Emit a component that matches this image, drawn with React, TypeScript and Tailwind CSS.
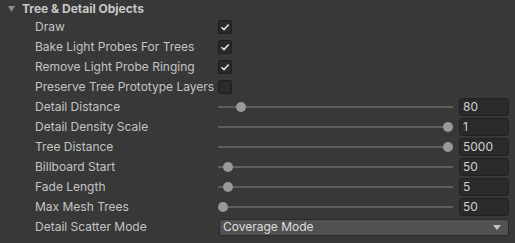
import * as React from 'react';

type Row =
  | { label: string; kind: 'check'; checked: boolean }
  | { label: string; kind: 'slider'; pos: number; value: string }
  | { label: string; kind: 'select'; value: string };

const rows: Row[] = [
  { label: 'Draw', kind: 'check', checked: true },
  { label: 'Bake Light Probes For Trees', kind: 'check', checked: true },
  { label: 'Remove Light Probe Ringing', kind: 'check', checked: true },
  { label: 'Preserve Tree Prototype Layers', kind: 'check', checked: false },
  { label: 'Detail Distance', kind: 'slider', pos: 0.08, value: '80' },
  { label: 'Detail Density Scale', kind: 'slider', pos: 1, value: '1' },
  { label: 'Tree Distance', kind: 'slider', pos: 1, value: '5000' },
  { label: 'Billboard Start', kind: 'slider', pos: 0.022, value: '50' },
  { label: 'Fade Length', kind: 'slider', pos: 0.022, value: '5' },
  { label: 'Max Mesh Trees', kind: 'slider', pos: 0, value: '50' },
  { label: 'Detail Scatter Mode', kind: 'select', value: 'Coverage Mode' },
];

function Check({ checked }: { checked: boolean }) {
  return (
    <div className="w-[14px] h-[14px] rounded-[2px] bg-[#2a2a2a] border border-[#1e1e1e] flex items-center justify-center">
      {checked && (
        <svg width="10" height="10" viewBox="0 0 10 10">
          <path d="M1.5 5.2 L4 7.6 L8.6 2.4" fill="none" stroke="#e6e6e6" strokeWidth="1.5" />
        </svg>
      )}
    </div>
  );
}

function Slider({ pos, value }: { pos: number; value: string }) {
  return (
    <div className="flex items-center flex-1 h-full">
      <div className="relative w-[235px] h-full flex items-center">
        <div className="w-full h-[2px] bg-[#5e5e5e]" />
        <div
          className="absolute w-[10px] h-[10px] rounded-full bg-[#999999]"
          style={{ left: 5 + pos * 225 - 5 }}
        />
      </div>
      <div className="ml-[6px] w-[50px] h-[18px] rounded-[3px] bg-[#2a2a2a] border border-[#212121] flex items-center pl-[3px] text-[#d2d2d2]">
        {value}
      </div>
    </div>
  );
}

function Select({ value }: { value: string }) {
  return (
    <div className="ml-[1px] w-[290px] h-[17px] rounded-[3px] bg-[#515151] border border-[#2a2a2a] flex items-center justify-between pl-[3px] pr-[7px] text-[#dedede]">
      <span>{value}</span>
      <svg width="8" height="5" viewBox="0 0 8 5">
        <path d="M0 0 H8 L4 5 Z" fill="#c4c4c4" />
      </svg>
    </div>
  );
}

export default function App() {
  return (
    <div
      className="w-[515px] h-[243px] bg-[#383838] text-[12px] text-[#c4c4c4] overflow-hidden"
      style={{ fontFamily: 'Inter, "Noto Sans", sans-serif' }}
    >
      <div className="h-[17px] flex items-center pl-[8px]">
        <svg width="7" height="6" viewBox="0 0 7 6" className="mr-[7px]">
          <path d="M0 0 H7 L3.5 6 Z" fill="#8a8a8a" />
        </svg>
        <span className="font-bold text-[#c8c8c8]">Tree &amp; Detail Objects</span>
      </div>
      {rows.map((r) => (
        <div key={r.label} className="h-5 flex items-center">
          <div className="w-[218px] pl-[35px] whitespace-nowrap">{r.label}</div>
          {r.kind === 'check' && <Check checked={r.checked} />}
          {r.kind === 'slider' && <Slider pos={r.pos} value={r.value} />}
          {r.kind === 'select' && <Select value={r.value} />}
        </div>
      ))}
    </div>
  );
}
